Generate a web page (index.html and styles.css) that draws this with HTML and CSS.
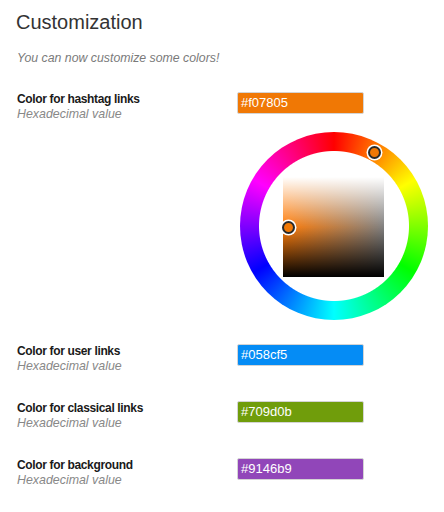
FILE: index.html
```html
<!DOCTYPE html>
<html>
<head>
<meta charset="utf-8">
<link rel="stylesheet" href="styles.css">
</head>
<body>
<div class="page">
  <h2 class="title">Customization</h2>
  <p class="intro">You can now customize some colors!</p>
  <div class="rows">
    <div class="row">
      <div class="label"><b>Color for hashtag links</b><i>Hexadecimal value</i></div>
      <div class="control">
        <div class="input" style="background:#f07805">#f07805</div>
        <div class="picker">
          <div class="ring">
            <div class="square"></div>
          </div>
          <span class="marker hue"></span>
          <span class="marker sl"></span>
        </div>
      </div>
    </div>
    <div class="row">
      <div class="label"><b>Color for user links</b><i>Hexadecimal value</i></div>
      <div class="control"><div class="input" style="background:#058cf5">#058cf5</div></div>
    </div>
    <div class="row">
      <div class="label"><b>Color for classical links</b><i>Hexadecimal value</i></div>
      <div class="control"><div class="input" style="background:#709d0b">#709d0b</div></div>
    </div>
    <div class="row">
      <div class="label"><b>Color for background</b><i>Hexadecimal value</i></div>
      <div class="control"><div class="input" style="background:#9146b9">#9146b9</div></div>
    </div>
  </div>
</div>
</body>
</html>
```

FILE: styles.css
```css
html, body {
  margin: 0;
  padding: 0;
  background: #fff;
}
.page {
  padding: 10px 16px 0 16px;
  font-family: "Liberation Sans", Arial, sans-serif;
}
.title {
  margin: 0;
  font-size: 20px;
  line-height: 24px;
  font-weight: normal;
  color: #333;
}
.intro {
  margin: 17px 0 0 1px;
  font-size: 12.3px;
  line-height: 15px;
  font-style: italic;
  color: #7a7a7a;
}
.rows {
  margin-top: 26px;
  display: flex;
  flex-direction: column;
  gap: 27px;
}
.row {
  display: flex;
}
.label {
  width: 220px;
  padding-left: 1px;
  display: flex;
  flex-direction: column;
  font-size: 12px;
  line-height: 15px;
}
.label b {
  color: #1a1a1a;
  font-weight: bold;
  letter-spacing: -0.35px;
}
.label i {
  color: #888;
  font-style: italic;
  font-size: 12.4px;
}
.control {
  display: flex;
  flex-direction: column;
}
.input {
  box-sizing: border-box;
  width: 127px;
  height: 22px;
  border: 1px solid #d4d4d4;
  border-radius: 2px;
  padding: 0 0 0 3px;
  color: #fff;
  font-size: 13px;
  line-height: 20px;
}
.picker {
  position: relative;
  width: 188px;
  height: 188px;
  margin: 18px 0 -3px 3px;
}
.ring {
  width: 188px;
  height: 188px;
  border-radius: 50%;
  background:
    radial-gradient(circle at center, #fff 0, #fff 74.5px, rgba(255,255,255,0) 75.5px),
    conic-gradient(#ff0000 0deg, #ffff00 60deg, #00ff00 120deg, #00ffff 180deg, #0000ff 240deg, #ff00ff 300deg, #ff0000 360deg);
  display: flex;
  align-items: center;
  justify-content: center;
}
.square {
  width: 101px;
  height: 100px;
  margin-left: -1px;
  margin-top: 2px;
  background:
    linear-gradient(to bottom, #fff 0%, rgba(255,255,255,0) 50%, rgba(0,0,0,0) 50%, #000 100%),
    linear-gradient(to right, #ff7d0a 0%, #808080 100%);
}
.marker {
  position: absolute;
  width: 9px;
  height: 9px;
  border: 2px solid #2a2a2a;
  border-radius: 50%;
  background: #f07805;
  box-shadow: 0 0 0 1.5px #fff;
}
.hue {
  left: 127.5px;
  top: 13.5px;
}
.sl {
  left: 41.5px;
  top: 88.5px;
}
```
